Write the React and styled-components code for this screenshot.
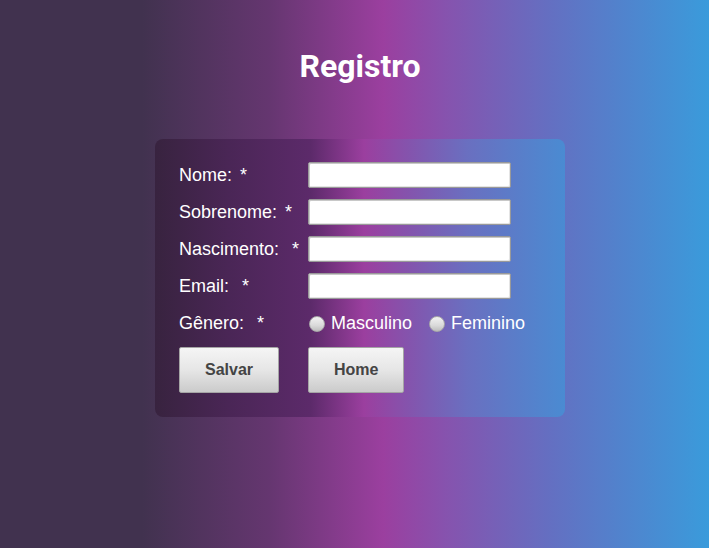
import React from "react";
import styled, { createGlobalStyle } from "styled-components";

const Global = createGlobalStyle`
  html, body { margin: 0; padding: 0; }
  body {
    min-height: 100vh;
    background: linear-gradient(to right, #41324f 0%, #41324f 20%, #653670 38%, #9b3f9f 54%, #8653ae 63%, #6370c2 78%, #3a9bdb 100%);
    font-family: "Liberation Sans", Arial, sans-serif;
  }
`;

const Page = styled.div`
  min-height: 548px;
  box-sizing: border-box;
  display: flex;
  flex-direction: column;
  align-items: center;
  padding: 48px 0 0 11px;
`;

const Title = styled.h1`
  margin: 0;
  font-family: Roboto, "Liberation Sans", sans-serif;
  font-weight: 700;
  font-size: 32px;
  line-height: 36px;
  color: #ffffff;
`;

const Card = styled.form`
  margin-top: 55px;
  width: 410px;
  box-sizing: border-box;
  padding: 23px 24px 24px;
  border-radius: 8px;
  background: linear-gradient(to right, #38233f 0%, #4a2656 18%, #5c2a6a 38%, #9b3f9f 51%, #8454ad 62%, #6a6fc0 76%, #4a8bd2 100%);
  display: grid;
  grid-template-columns: 129px 1fr;
  grid-template-rows: repeat(5, 26px) 46px;
  row-gap: 11px;
  align-items: center;
`;

const Label = styled.label`
  color: #ffffff;
  font-size: 18px;
  white-space: pre;
`;

const Star = styled.span`
  margin-left: 3px;
`;

const TextInput = styled.input`
  width: 203px;
  height: 26px;
  box-sizing: border-box;
  border: 1px solid #999999;
  border-radius: 2px;
  background: #ffffff;
  box-shadow: inset 1px 1px 0 #c8c8c8, inset -1px -1px 0 #e4e4e4;
  padding: 2px 4px;
  font-size: 15px;
  outline: none;
`;

const RadioGroup = styled.div`
  display: flex;
  align-items: center;
  gap: 16px;
  white-space: nowrap;
`;

const RadioOption = styled.label`
  display: flex;
  align-items: center;
  gap: 6px;
  color: #ffffff;
  font-size: 18px;
`;

const Radio = styled.input`
  appearance: none;
  margin: 2px 0 0 1px;
  width: 16px;
  height: 16px;
  border-radius: 50%;
  border: 1px solid #a8a8a8;
  background: linear-gradient(to bottom, #f2f2f2 0%, #dadada 60%, #bdbdbd 100%);
  box-sizing: border-box;
`;

const Button = styled.button`
  justify-self: start;
  height: 46px;
  padding: 0 ${(p) => p.$pad}px;
  border: 1px solid #a5a5a5;
  border-radius: 2px;
  background: linear-gradient(to bottom, #f5f5f5 0%, #e6e6e6 50%, #cbcbcb 100%);
  color: #444444;
  font-family: "Liberation Sans", Arial, sans-serif;
  font-weight: 700;
  font-size: 16px;
`;

const Field = ({ label, gap }) => (
  <Label>
    {label + gap}
    <Star>*</Star>
  </Label>
);

export default function App() {
  return (
    <>
      <Global />
      <Page>
        <Title>Registro</Title>
        <Card onSubmit={(e) => e.preventDefault()}>
          <Field label="Nome:" gap=" " />
          <TextInput type="text" />
          <Field label="Sobrenome:" gap=" " />
          <TextInput type="text" />
          <Field label="Nascimento:" gap="  " />
          <TextInput type="text" />
          <Field label="Email:" gap="  " />
          <TextInput type="text" />
          <Field label="Gênero:" gap="  " />
          <RadioGroup>
            <RadioOption>
              <Radio type="radio" name="genero" />
              Masculino
            </RadioOption>
            <RadioOption>
              <Radio type="radio" name="genero" />
              Feminino
            </RadioOption>
          </RadioGroup>
          <Button type="submit" $pad={25}>Salvar</Button>
          <Button type="button" $pad={25}>Home</Button>
        </Card>
      </Page>
    </>
  );
}
